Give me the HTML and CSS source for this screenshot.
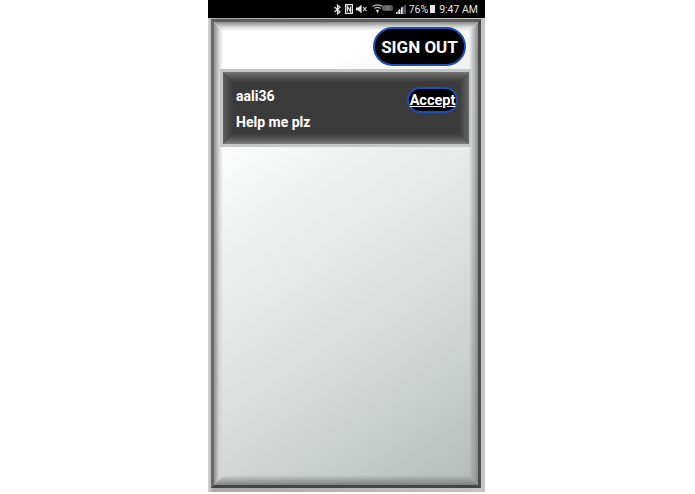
FILE: index.html
```html
<!DOCTYPE html>
<html lang="en">
<head>
  <meta charset="utf-8" />
  <title>Requests</title>
  <meta name="viewport" content="width=device-width, initial-scale=1" />
  <link rel="stylesheet" href="styles.css">
</head>
<body>
  <div class="phone">
    <div class="status-bar">
      <svg class="icon bt" width="7" height="11" viewBox="0 0 7 11"><path d="M0.5 3 L6 7.8 L3.5 10 V1 L6 3.2 L0.5 8" fill="none" stroke="#e8e8e8" stroke-width="1.2"/></svg>
      <svg class="icon nfc" width="8" height="10" viewBox="0 0 8 10"><rect x="0.6" y="0.6" width="6.8" height="8.8" fill="none" stroke="#e8e8e8" stroke-width="1.2"/><path d="M2.4 7.6 V2.4 L5.6 7.6 V2.4" fill="none" stroke="#e8e8e8" stroke-width="1.2"/></svg>
      <svg class="icon mute" width="11" height="10" viewBox="0 0 11 10"><path d="M0 3.4 H2.4 L5.6 0.6 V9.4 L2.4 6.6 H0 Z" fill="#e8e8e8"/><path d="M7 3 L10.5 7 M10.5 3 L7 7" stroke="#e8e8e8" stroke-width="1.1"/></svg>
      <svg class="icon wifi" width="11" height="10" viewBox="0 0 11 10"><path d="M0.5 2.6 Q5.5 -1 10.5 2.6 M2.2 4.6 Q5.5 2 8.8 4.6" fill="none" stroke="#bbb" stroke-width="1.2"/><path d="M3.9 6 Q5.5 5 7.1 6 L5.5 9.6 Z" fill="#ccc"/></svg>
      <svg class="icon lte" width="11" height="6" viewBox="0 0 11 6"><rect width="11" height="6" rx="2" fill="#555"/><path d="M2 1.5 V4.5 M4 1.5 H6 V4.5 H4 M8 1.5 V4.5" stroke="#999" stroke-width="0.8" fill="none"/></svg>
      <svg class="icon signal" width="10" height="10" viewBox="0 0 10 10"><path d="M0 10 L10 0 V10 Z" fill="#555"/><path d="M0 10 V8.6 L1.5 7.2 V10 Z M2.4 10 V6.2 L4 4.8 V10 Z M5 10 V3.8 L6.6 2.4 V10 Z" fill="#f0f0f0"/></svg>
      <span class="pct">76%</span>
      <span class="battery"></span>
      <span class="clock">9:47 AM</span>
    </div>

    <div class="frame">
      <div class="screen bevel">
        <i class="edge top"></i><i class="edge right"></i><i class="edge bottom"></i><i class="edge left"></i>
        <div class="toolbar">
          <button class="btn sign-out">SIGN OUT</button>
        </div>
        <div class="request-wrap">
          <div class="request bevel">
            <i class="edge top"></i><i class="edge right"></i><i class="edge bottom"></i><i class="edge left"></i>
            <div class="request-text">
              <p>aali36</p>
              <p>Help me plz</p>
            </div>
            <button class="btn accept">Accept</button>
          </div>
        </div>
      </div>
    </div>
  </div>
</body>
</html>
```

FILE: styles.css
```css
* { box-sizing: border-box; margin: 0; padding: 0; }

body {
  background: #fff;
  font-family: Roboto, "Liberation Sans", sans-serif;
  overflow: hidden;
}

.phone {
  width: 277px;
  margin-left: 208px;
}

.status-bar {
  height: 18px;
  background: #000;
  color: #e8e8e8;
  display: flex;
  align-items: center;
  justify-content: flex-end;
  padding-right: 7px;
  font-size: 10.5px;
}

.icon { display: block; margin-right: 3px; }
.bt { margin-right: 4px; }
.nfc { margin-right: 3px; }
.mute { margin-right: 5px; }
.wifi { margin-right: -1px; margin-top: -1px; }
.lte { margin-right: 3px; margin-top: -3px; }

.battery {
  width: 5px;
  height: 8px;
  margin: 0 4px 0 2px;
  background: #e8e8e8;
}

.frame {
  height: 474px;
  padding: 1px 4px 4px 3px;
  background: #bdbdbd;
  background: linear-gradient(90deg, #d4d4d4, #a8a8a8 2%, #c4c4c4 98%);
}

/* bevelled panels: four mitred strips lie over the panel's edge */
.bevel { position: relative; }

.edge {
  position: absolute;
  display: block;
  pointer-events: none;
}

.screen {
  height: 100%;
  border: 3px solid #5f5f5f;
  border-left-color: #6a6a6a;
  border-right-color: #4c4c4c;
  border-bottom-color: #454545;
  background: linear-gradient(146deg, #fff 19%, #f5f6f6 28%, #e6e9e8 48%, #d2d7d5 72%, #b3bbb8 100%);
  padding: 5px 12px 0 5px;
}

.screen > .top {
  top: 0; left: 0; right: 0; height: 9px;
  background: linear-gradient(#8a8a8a, #d8d8d8 55%, rgba(255,255,255,0));
  clip-path: polygon(0 0, 100% 0, calc(100% - 9px) 100%, 9px 100%);
}

.screen > .bottom {
  bottom: 0; left: 0; right: 0; height: 10px;
  background: linear-gradient(rgba(150,155,153,0), #7d8180);
  clip-path: polygon(10px 0, calc(100% - 10px) 0, 100% 100%, 0 100%);
}

.screen > .left {
  top: 0; bottom: 0; left: 0; width: 9px;
  background: linear-gradient(90deg, #8c8c8c, #d4d4d4 55%, rgba(255,255,255,0));
  clip-path: polygon(0 0, 100% 9px, 100% calc(100% - 9px), 0 100%);
}

.screen > .right {
  top: 0; bottom: 0; right: 0; width: 9px;
  background: linear-gradient(90deg, rgba(170,175,173,0), #8a8d8c);
  clip-path: polygon(0 9px, 100% 0, 100% 100%, 0 calc(100% - 9px));
}

.toolbar {
  position: relative;
  display: flex;
  justify-content: flex-end;
  height: 39px;
}

.btn {
  background: #000;
  color: #fff;
  border: 2px solid #1c4fb4;
  font-family: Roboto, "Liberation Sans", sans-serif;
  font-weight: 700;
}

.sign-out {
  width: 93px;
  height: 39px;
  border-radius: 20px;
  font-size: 17px;
}

.request-wrap {
  position: relative;
  margin: 3px 0 0 1px;
  padding: 3px 2px 3px 3px;
  background: #c6c6c6;
  width: 251px;
}

.request {
  height: 72px;
  background: #3b3b3b;
  display: flex;
  justify-content: space-between;
  padding: 13px 11px 0 13px;
  color: #fff;
}

.request > .top {
  top: 0; left: 0; right: 0; height: 10px;
  background: linear-gradient(#777, #5a5a5a 45%, #3b3b3b);
  clip-path: polygon(0 0, 100% 0, calc(100% - 10px) 100%, 10px 100%);
}

.request > .bottom {
  bottom: 0; left: 0; right: 0; height: 10px;
  background: linear-gradient(#3b3b3b, #5c5c5c 55%, #808080);
  clip-path: polygon(10px 0, calc(100% - 10px) 0, 100% 100%, 0 100%);
}

.request > .left {
  top: 0; bottom: 0; left: 0; width: 10px;
  background: linear-gradient(90deg, #5e5e5e, #3b3b3b);
  clip-path: polygon(0 0, 100% 10px, 100% calc(100% - 10px), 0 100%);
}

.request > .right {
  top: 0; bottom: 0; right: 0; width: 10px;
  background: linear-gradient(90deg, #3b3b3b, #666);
  clip-path: polygon(0 10px, 100% 0, 100% 100%, 0 calc(100% - 10px));
}

.request-text {
  position: relative;
  font-size: 14px;
  font-weight: 700;
  line-height: 17px;
  padding-top: 3px;
}

.request-text p + p { margin-top: 9px; }

.accept {
  position: relative;
  width: 51px;
  height: 26px;
  margin-top: 2px;
  border-radius: 13px;
  font-size: 14.5px;
  text-decoration: underline;
}
```
